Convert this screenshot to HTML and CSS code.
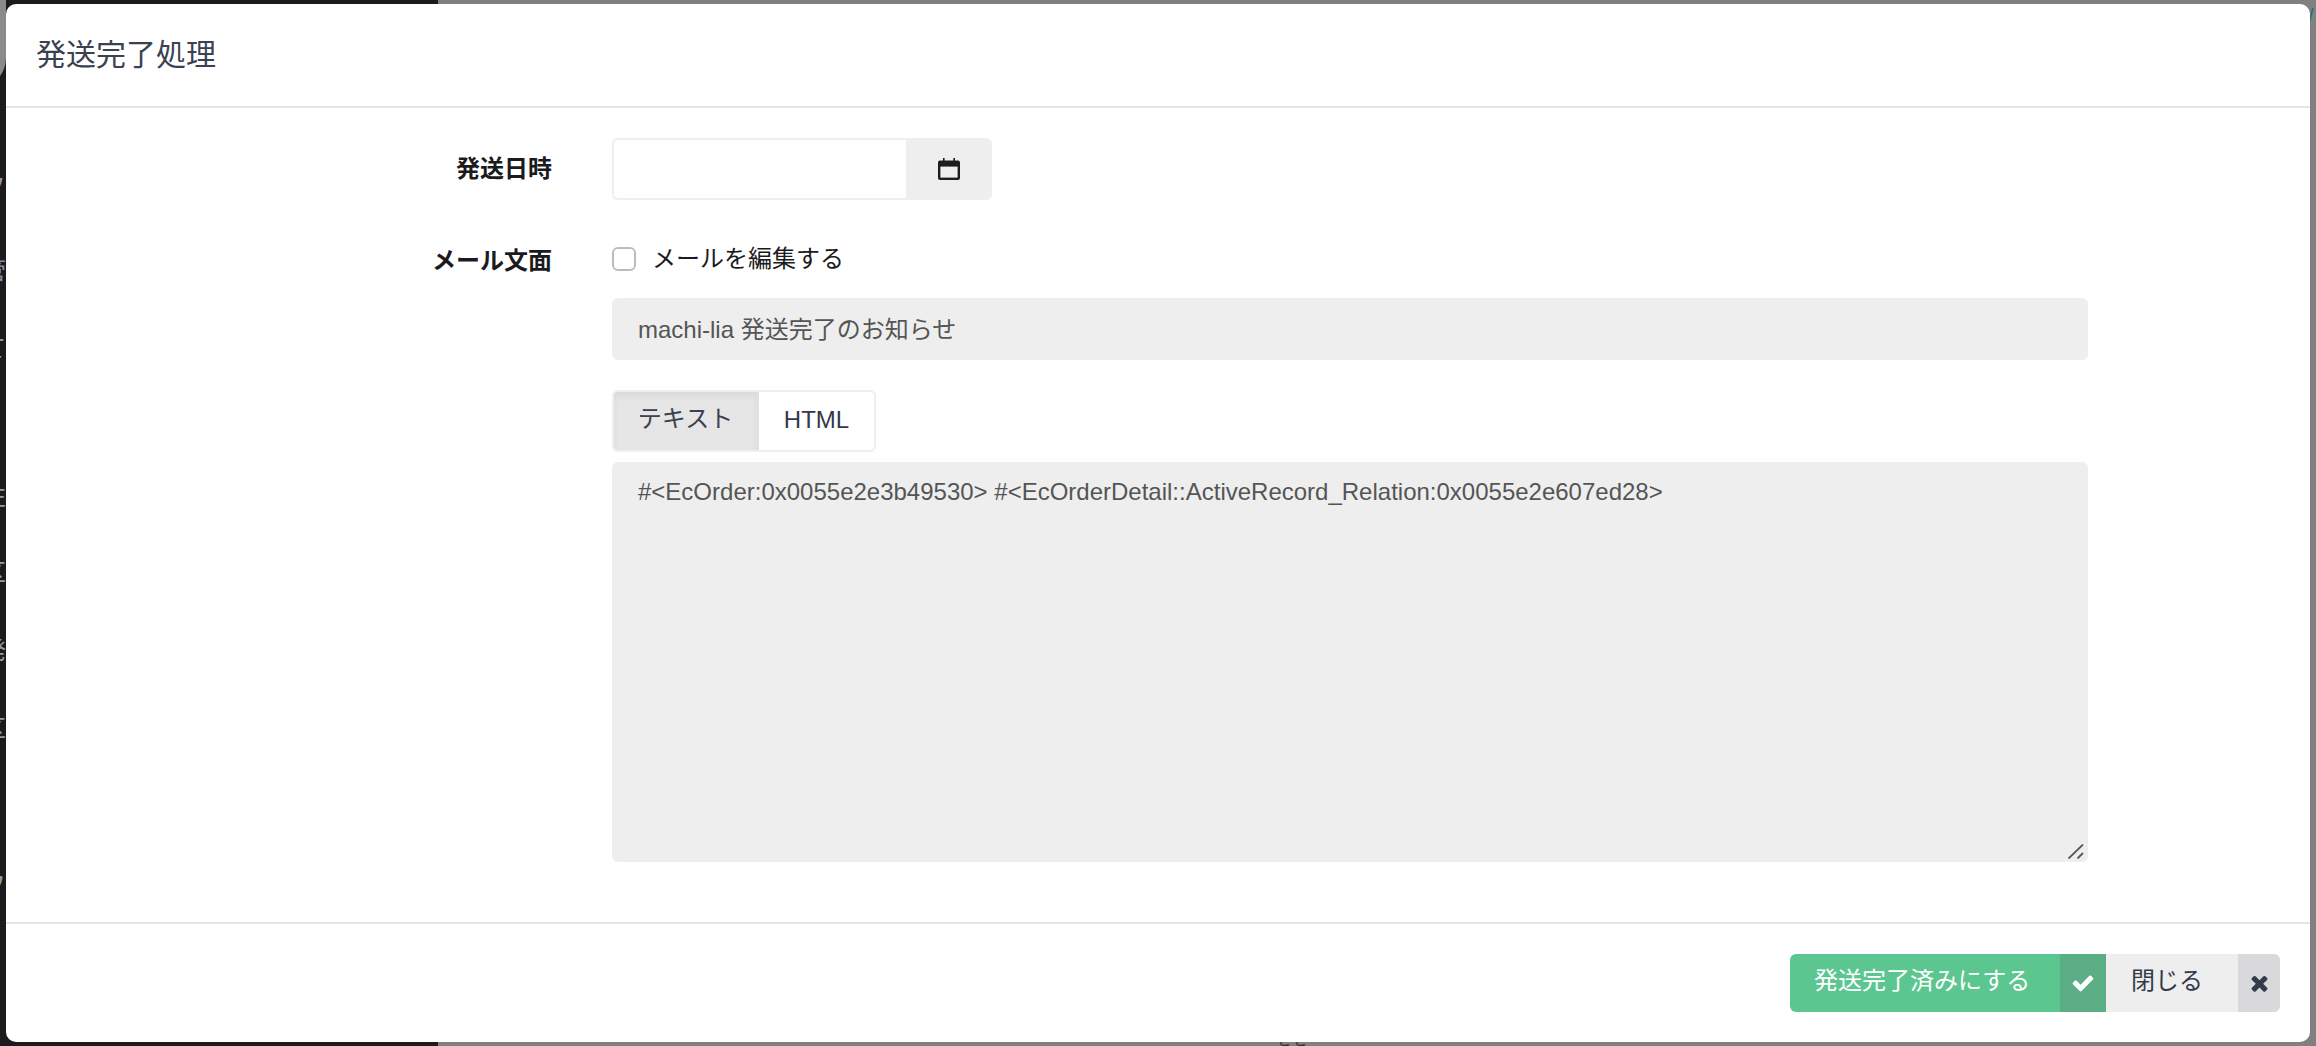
FILE: index.html
```html
<!DOCTYPE html>
<html lang="ja">
<head>
<meta charset="utf-8">
<title>発送完了処理</title>
<link rel="stylesheet" href="styles.css">
</head>
<body>
<div class="backdrop">
  <div class="backdrop-top"></div>
  <div class="backdrop-thumb"></div>
  <ul class="backdrop-menu">
    <li class="m1">ソ</li>
    <li class="m2">管</li>
    <li class="m3">て</li>
    <li class="m4">A</li>
    <li class="m5">左</li>
    <li class="m6">区</li>
    <li class="m7">発</li>
    <li class="m8">区</li>
    <li class="m9">></li>
    <li class="m10">フ</li>
  </ul>
  <span class="backdrop-under">せせ</span>
  <span class="backdrop-edge">/</span>
</div>
<div class="modal">
  <header class="modal-header">
    <h1 class="modal-title">発送完了処理</h1>
  </header>
  <main class="modal-body">
    <div class="row row-date">
      <label class="row-label">発送日時</label>
      <div class="row-field">
        <div class="date-group">
          <input class="date-input" type="text">
          <span class="date-addon">
            <svg class="icon-calendar" viewBox="0 0 22 22" aria-hidden="true">
              <path fill="#1c1c1e" d="M5 0h1.600v2.400H15.400V0H17v2.400h3a2 2 0 0 1 2 2V20a2 2 0 0 1-2 2H2a2 2 0 0 1-2-2V4.400a2 2 0 0 1 2-2h3z"/>
              <rect x="2.400" y="8.600" width="17.200" height="11" fill="#eee"/>
            </svg>
          </span>
        </div>
      </div>
    </div>
    <div class="row row-mail">
      <label class="row-label label-mail">メール文面</label>
      <div class="row-field">
        <label class="check-line">
          <input class="check-box" type="checkbox">
          <span>メールを編集する</span>
        </label>
        <div class="subject">machi-lia 発送完了のお知らせ</div>
        <div class="tabs">
          <span class="tab tab-active">テキスト</span>
          <span class="tab">HTML</span>
        </div>
        <div class="mail-wrap">
          <textarea class="mail-text" readonly>#&lt;EcOrder:0x0055e2e3b49530&gt; #&lt;EcOrderDetail::ActiveRecord_Relation:0x0055e2e607ed28&gt;</textarea>
          <svg class="grip" viewBox="0 0 16 15" aria-hidden="true">
            <path d="M0.500 14.500L15 0.500M9.500 14.500L15 9" fill="none" stroke="#555" stroke-width="1.800"/>
          </svg>
        </div>
      </div>
    </div>
  </main>
  <footer class="modal-footer">
    <div class="btn btn-done">
      <span class="btn-text">発送完了済みにする</span>
      <span class="btn-icon">
        <svg class="icon-check" viewBox="0 0 1792 1792" aria-hidden="true"><path fill="#fff" d="M1671 566q0 40-28 68l-724 724-136 136q-28 28-68 28t-68-28l-136-136-362-362q-28-28-28-68t28-68l136-136q28-28 68-28t68 28l294 295 656-657q28-28 68-28t68 28l136 136q28 28 28 68z"/></svg>
      </span>
    </div>
    <div class="btn btn-close">
      <span class="btn-text">閉じる</span>
      <span class="btn-icon">
        <svg class="icon-times" viewBox="0 0 1408 1792" aria-hidden="true"><path fill="#333a4a" d="M1298 1322q0 40-28 68l-136 136q-28 28-68 28t-68-28l-294-294-294 294q-28 28-68 28t-68-28l-136-136q-28-28-28-68t28-68l294-294-294-294q-28-28-28-68t28-68l136-136q28-28 68-28t68 28l294 294 294-294q28-28 68-28t68 28l136 136q28 28 28 68t-28 68l-294 294 294 294q28 28 28 68z"/></svg>
      </span>
    </div>
  </footer>
</div>
</body>
</html>
```
FILE: styles.css
```css
* { box-sizing: border-box; }
html, body { margin: 0; height: 100%; overflow: hidden; }
body {
  background: #808080;
  font-family: "Liberation Sans", "Noto Sans CJK JP", sans-serif;
  font-size: 24px;
  color: #1b1b1d;
  padding: 4px 6px;
}
.backdrop { position: absolute; inset: 0; overflow: hidden; }
.backdrop-top { position: absolute; left: 0; top: 0; width: 438px; height: 1046px; background: #1b1b1d; }
.backdrop-thumb { position: absolute; left: -60px; top: 0; width: 66px; height: 88px; background: #8a8a8a; border-radius: 0 0 30px 0; }
.backdrop-menu { position: absolute; left: 0; top: 0; width: 6px; height: 1046px; margin: 0; padding: 0; list-style: none; overflow: hidden; color: #9a9a9a; }
.backdrop-menu li { position: absolute; right: 0; width: 24px; line-height: 28px; font-size: 24px; }
.m1 { top: 173px; }
.m2 { top: 257px; color: #7f93ad; }
.m3 { top: 335px; }
.m4 { top: 408px; }
.m5 { top: 483px; }
.m6 { top: 559px; }
.m7 { top: 637px; }
.m8 { top: 715px; }
.m9 { top: 794px; }
.m10 { top: 871px; }
.backdrop-under { position: absolute; left: 1276px; top: 1030px; font-size: 16px; line-height: 20px; color: #333; }
.backdrop-edge { position: absolute; left: 2308px; top: 4px; font-size: 20px; line-height: 24px; color: #1d6f78; }
.modal {
  position: relative;
  height: 1038px;
  width: 2304px;
  background: #fff;
  border-radius: 10px;
  display: flex;
  flex-direction: column;
}
.modal-header { height: 104px; padding: 30px 30px 0; border-bottom: 2px solid #e5e5e5; flex: none; }
.modal-title { margin: 0; font-size: 30px; line-height: 42px; font-weight: 400; color: #3a4150; }
.modal-body { flex: 1; padding: 30px 0 0; }
.row { display: flex; }
.row-label { width: 606px; padding-right: 60px; text-align: right; font-weight: 700; line-height: 62px; flex: none; color: #1b1b1d; }
.label-mail { line-height: 36px; padding-top: 13px; }
.row-field { width: 1476px; }
.row-date { height: 62px; margin-bottom: 30px; }
.date-group { display: flex; width: 380px; height: 62px; }
.date-input { width: 294px; height: 62px; border: 2px solid #eee; border-right: 0; border-radius: 6px 0 0 6px; background: #fff; padding: 0 24px; margin: 0; outline: 0; }
.date-addon { flex: 1; background: #eee; border-radius: 0 6px 6px 0; display: flex; align-items: center; justify-content: center; }
.icon-calendar { width: 22px; height: 22px; display: block; }
.check-line { display: flex; align-items: center; gap: 16px; height: 36px; line-height: 36px; margin-top: 11px; }
.check-box { appearance: none; -webkit-appearance: none; width: 24px; height: 24px; margin: 0; background: #fff; border: 2px solid #bcbcbc; border-radius: 6px; flex: none; }
.subject { margin-top: 21px; height: 62px; background: #eee; border-radius: 6px; padding: 0 26px; line-height: 64px; color: #555; }
.tabs { display: flex; width: 264px; height: 62px; margin-top: 30px; border: 2px solid #eee; border-radius: 6px; color: #333a4a; overflow: hidden; }
.tab { flex: none; width: 115px; text-align: center; line-height: 56px; background: #fff; }
.tab-active { width: 145px; background: #e6e6e6; color: #3a4150; border-right: 2px solid #e0e0e0; box-shadow: inset 0 4px 6px rgba(0,0,0,.06); line-height: 54px; }
.mail-wrap { position: relative; margin-top: 10px; height: 400px; }
.mail-text {
  display: block;
  width: 100%;
  height: 400px;
  padding: 15px 26px;
  border: 0;
  border-radius: 6px;
  background: #eee;
  color: #555;
  font: inherit;
  line-height: 30px;
  outline: 0;
  resize: none;
}
.grip { position: absolute; right: 4px; bottom: 3px; width: 16px; height: 15px; display: block; }
.modal-footer { height: 120px; flex: none; border-top: 2px solid #e5e5e5; display: flex; justify-content: flex-end; padding: 30px 30px 0 0; }
.btn { display: flex; height: 58px; line-height: 54px; }
.btn-text { display: block; }
.btn-icon { display: flex; align-items: center; justify-content: center; }
.btn-done { background: #5cc691; color: #fff; border-radius: 6px 0 0 6px; }
.btn-done .btn-text { width: 270px; padding-left: 24px; }
.btn-done .btn-icon { width: 46px; background: #5aad84; }
.btn-close { background: #eee; color: #333a4a; border-radius: 0 6px 6px 0; }
.btn-close .btn-text { width: 132px; padding-left: 25px; }
.btn-close .btn-icon { width: 42px; background: #d9d9db; border-radius: 0 6px 6px 0; }
.icon-check { width: 24px; height: 24px; display: block; }
.icon-times { width: 19px; height: 24px; display: block; }
```
